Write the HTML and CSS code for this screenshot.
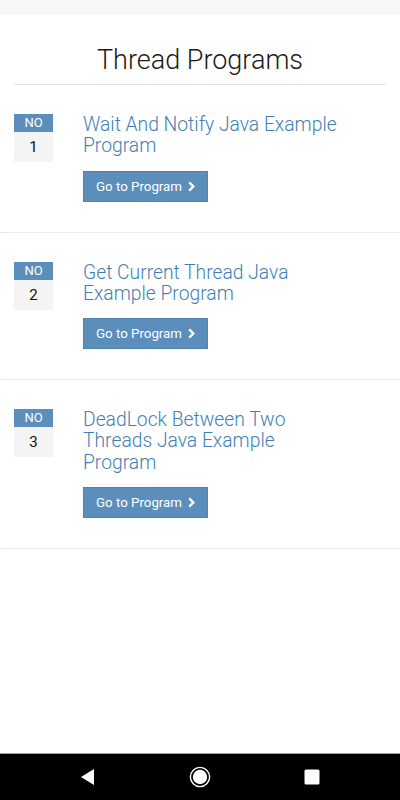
FILE: index.html
```html
<!DOCTYPE html>
<html>
<head>
<meta charset="utf-8">
<link rel="stylesheet" href="styles.css">
</head>
<body>
<div class="screen">
  <div class="topbar"></div>
  <main class="content">
    <h1 class="page-title">Thread Programs</h1>
    <ul class="list">
      <li class="item">
        <div class="badge"><span class="badge-label">NO</span><span class="badge-num">1</span></div>
        <div class="item-body">
          <a class="item-title">Wait And Notify Java Example Program</a>
          <a class="btn">Go to Program <svg class="chev" viewBox="0 0 10 12" width="9" height="11"><path d="M2.5 1.5 L7 6 L2.5 10.5" fill="none" stroke="#fff" stroke-width="2.6"/></svg></a>
        </div>
      </li>
      <li class="item">
        <div class="badge"><span class="badge-label">NO</span><span class="badge-num">2</span></div>
        <div class="item-body">
          <a class="item-title">Get Current Thread Java Example Program</a>
          <a class="btn">Go to Program <svg class="chev" viewBox="0 0 10 12" width="9" height="11"><path d="M2.5 1.5 L7 6 L2.5 10.5" fill="none" stroke="#fff" stroke-width="2.6"/></svg></a>
        </div>
      </li>
      <li class="item">
        <div class="badge"><span class="badge-label">NO</span><span class="badge-num">3</span></div>
        <div class="item-body">
          <a class="item-title">DeadLock Between Two Threads Java Example Program</a>
          <a class="btn">Go to Program <svg class="chev" viewBox="0 0 10 12" width="9" height="11"><path d="M2.5 1.5 L7 6 L2.5 10.5" fill="none" stroke="#fff" stroke-width="2.6"/></svg></a>
        </div>
      </li>
    </ul>
  </main>
  <nav class="navbar">
    <span class="nav-btn"><svg width="16" height="18" viewBox="0 0 16 18"><path d="M14 1 L14 17 L1 9 Z" fill="#fff"/></svg></span>
    <span class="nav-btn"><svg width="22" height="22" viewBox="0 0 22 22"><circle cx="11" cy="11" r="9.6" fill="none" stroke="#fff" stroke-width="1.4"/><circle cx="11" cy="11" r="7.2" fill="#fff"/></svg></span>
    <span class="nav-btn"><svg width="16" height="16" viewBox="0 0 16 16"><rect x="0.5" y="0.5" width="15" height="15" rx="1.5" fill="#fff"/></svg></span>
  </nav>
</div>
</body>
</html>
```

FILE: styles.css
```css
* { box-sizing: border-box; }
html, body { margin: 0; padding: 0; }
body {
  font-family: Roboto, "Liberation Sans", Arial, sans-serif;
  background: #fff;
  width: 400px;
  height: 800px;
  overflow: hidden;
}
.screen {
  display: flex;
  flex-direction: column;
  height: 800px;
}
.topbar {
  height: 15px;
  background: #f7f7f7;
  flex: none;
}
.content {
  flex: 1;
}
.page-title {
  margin: 0 14px;
  padding: 29px 0 8px;
  text-align: center;
  font-weight: 300;
  font-size: 27px;
  line-height: 32px;
  color: #1a1a1a;
  border-bottom: 1px solid #e3e3e3;
}
.list {
  list-style: none;
  margin: 0;
  padding: 0;
}
.item {
  display: flex;
  align-items: flex-start;
  padding: 29px 14px 30px;
  border-bottom: 1px dotted #dcdcdc;
}
.badge {
  width: 39px;
  flex: none;
  display: flex;
  flex-direction: column;
}
.badge-label {
  background: #5b8eba;
  color: #fff;
  font-size: 13px;
  line-height: 18px;
  height: 18px;
  text-align: center;
}
.badge-num {
  background: #f4f4f4;
  color: #111;
  font-size: 15px;
  height: 30px;
  line-height: 30px;
  text-align: center;
}
.item-body {
  margin-left: 30px;
  display: flex;
  flex-direction: column;
  align-items: flex-start;
  width: 262px;
}
.item-title {
  color: #3f7fb5;
  font-weight: 300;
  font-size: 19.3px;
  line-height: 21.3px;
}
.btn {
  margin-top: 14px;
  display: inline-flex;
  align-items: center;
  white-space: nowrap;
  gap: 5px;
  height: 31px;
  width: 125px;
  padding: 0 0 0 12px;
  background: #5b8eba;
  border: 1px solid #4f82ae;
  color: #fff;
  font-size: 13.3px;
}
.navbar {
  flex: none;
  height: 47px;
  background: #000;
  border-top: 1px solid #a0a0a0;
  display: flex;
  align-items: center;
  gap: 88px;
  padding-left: 76px;
}
.nav-btn {
  width: 24px;
  height: 24px;
  display: flex;
  align-items: center;
  justify-content: center;
}
```
